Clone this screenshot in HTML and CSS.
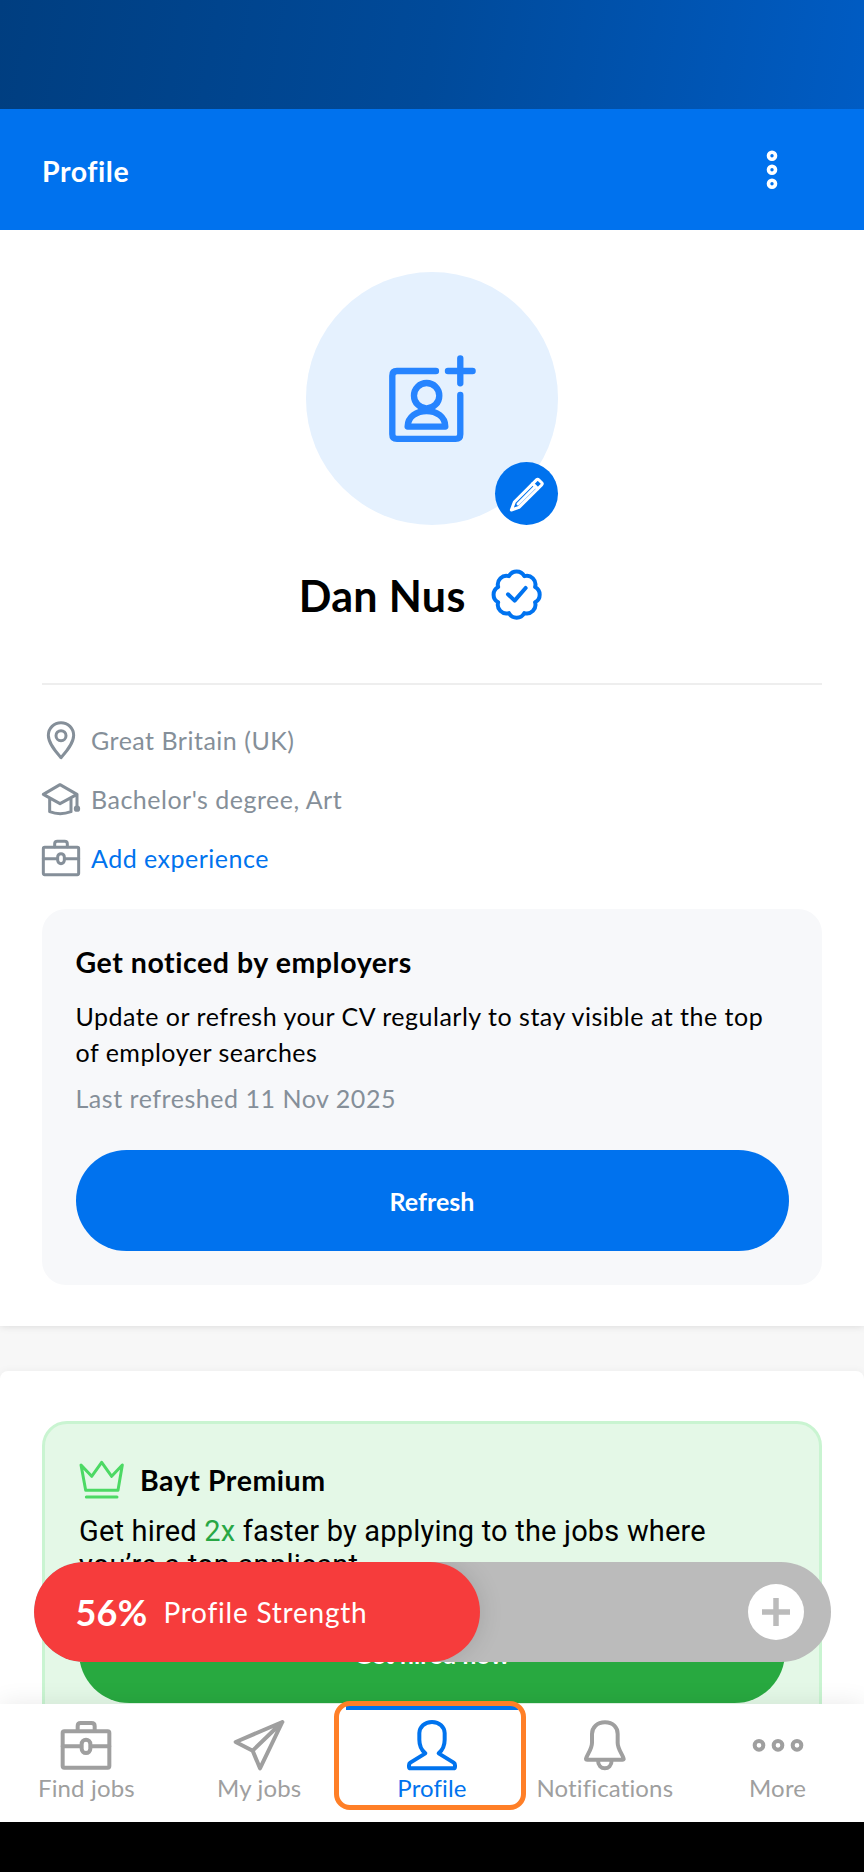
FILE: index.html
```html
<!DOCTYPE html>
<html lang="en">
<head>
<meta charset="utf-8">
<title>Profile</title>
<link rel="stylesheet" href="styles.css">
</head>
<body>
<div class="screen">
  <div class="status-bar"></div>
  <header class="app-bar">
    <h1 class="app-title">Profile</h1>
    <svg class="kebab" viewBox="0 0 12 40" fill="none" stroke="#fff" stroke-width="3.6"><circle cx="6" cy="5.7" r="3.5"/><circle cx="6" cy="19.7" r="3.5"/><circle cx="6" cy="33.7" r="3.5"/></svg>
  </header>

  <main class="content">
    <section class="profile">
      <div class="avatar">
        <svg class="avatar-icon" viewBox="47 36 758 758" fill="none" stroke="#2684ff" stroke-width="19" stroke-linecap="round" stroke-linejoin="round">
          <path d="M437 333H320Q306 333 306 347V523Q306 537 320 537H496Q510 537 510 523V405"/>
          <path d="M473 333H547M510 295V370"/>
          <circle cx="409" cy="407" r="38"/>
          <path d="M352 500C352 470 380 453 409 453S465 470 465 500Z"/>
        </svg>
        <span class="edit-badge">
          <svg viewBox="616 604 189 189" fill="none" stroke="#fff" stroke-width="9" stroke-linecap="round" stroke-linejoin="round">
            <path d="M665 748L674 724L742 656Q745 655 748 658L757 667Q759 670 756 673L688 740Z"/>
            <path d="M729 669L744 684M734 681L685 730"/>
          </svg>
        </span>
      </div>

      <div class="name-row">
        <h2 class="name">Dan Nus</h2>
        <svg class="verified" viewBox="630 58 155 155" fill="none" stroke="#0073f0" stroke-width="12" stroke-linecap="round" stroke-linejoin="round">
          <path d="M684 79.6A26 26 0 0 1 730 79.6A26 26 0 0 1 762.4 112A26 26 0 0 1 762.4 158A26 26 0 0 1 730 190.4A26 26 0 0 1 684 190.4A26 26 0 0 1 651.6 158A26 26 0 0 1 651.6 112A26 26 0 0 1 684 79.6Z"/>
          <path d="M681 134L701 153L734 115"/>
        </svg>
      </div>

      <ul class="facts">
        <li><svg class="fact-icon" viewBox="33 150 120 120"><circle cx="93" cy="197" r="15"/><path d="M93 263C78 246 55 221 55 196A38 38 0 0 1 131 196C131 221 108 246 93 263Z"/></svg><span>Great Britain (UK)</span></li>
        <li><svg class="fact-icon" viewBox="33 326 120 120"><path d="M40 372L90 343L141 372L90 400ZM59 384V424Q90 436 123 424V384M141 372V408"/><circle cx="141" cy="415" r="5"/></svg><span>Bachelor's degree, Art</span></li>
        <li><svg class="fact-icon" viewBox="33 504 120 120"><rect x="40" y="532" width="106" height="82" rx="4"/><path d="M74 530V522Q74 514 82 514H104Q112 514 112 522V530M40 566H80M105 566H146"/><rect x="83" y="551" width="20" height="30" rx="10"/></svg><a class="link">Add experience</a></li>
      </ul>

      <div class="notice">
        <h3 class="notice-title">Get noticed by employers</h3>
        <p class="notice-text">Update or refresh your CV regularly to stay visible at the top<br>of employer searches</p>
        <p class="notice-date">Last refreshed 11 Nov 2025</p>
        <button class="btn">Refresh</button>
      </div>
    </section>

    <section class="premium-section">
      <div class="premium">
        <div class="premium-head">
          <svg class="crown" viewBox="235 508 138 124" fill="none" stroke="#4cd964" stroke-width="9" stroke-linecap="round" stroke-linejoin="round"><path d="M241 526L255 602H352L365 526L333 560L303 518L273 560ZM257 622H349"/></svg>
          <h3 class="premium-title">Bayt Premium</h3>
        </div>
        <p class="premium-text">Get hired <span class="accent">2x</span> faster by applying to the jobs where<br>you’re a top applicant</p>
        <button class="btn btn-green">Get hired now</button>
      </div>
    </section>
  </main>

  <div class="strength">
    <div class="strength-fill"><b class="percent">56%</b><span class="strength-label">Profile Strength</span></div>
    <svg class="plus" viewBox="0 0 56 56"><circle cx="28" cy="28" r="28" fill="#fff"/><path d="M28 14V42M14 28H42" stroke="#bbb" stroke-width="5.5"/></svg>
  </div>

  <nav class="tabs">
    <a class="tab"><svg viewBox="184 541 150 150"><rect x="189" y="575" width="140" height="109" rx="5"/><path d="M234 574V559Q234 550 243 550H275Q285 550 285 559V574M189 620H242M276 620H329"/><rect x="246" y="600" width="26" height="40" rx="13"/></svg><span>Find jobs</span></a>
    <a class="tab"><svg viewBox="702 541 150 150"><path d="M847 547L707 607L758 633L780 686ZM758 633L847 547"/></svg><span>My jobs</span></a>
    <a class="tab active"><svg viewBox="1221 541 150 150"><path d="M1296 547C1273 547 1259 562 1258 580V600C1258 620 1264 631 1276 641L1231 669Q1227 672 1227 677V681Q1227 686 1232 686H1360Q1365 686 1365 681V677Q1365 672 1361 669L1316 641C1328 631 1334 620 1334 600V580C1333 562 1319 547 1296 547Z"/></svg><span>Profile</span></a>
    <a class="tab"><svg viewBox="449 541 150 150"><path d="M524 548C500 548 485 563 485 583V609C485 628 470 645 467 657Q467 660 471 660H576Q581 660 580 657C577 645 562 628 562 609V583C562 563 548 548 524 548ZM503 662C503 694 544 694 544 662"/></svg><span>Notifications</span></a>
    <a class="tab"><svg viewBox="968 541 150 150"><circle cx="986" cy="617" r="13"/><circle cx="1043" cy="617" r="13"/><circle cx="1100" cy="617" r="13"/></svg><span>More</span></a>
    <span class="highlight"></span>
  </nav>
  <div class="home-bar"></div>
</div>
</body>
</html>
```
FILE: styles.css
```css
* { box-sizing: border-box; margin: 0; padding: 0; }

body { font-family: Lato, "Liberation Sans", sans-serif; color: #000; }

.screen {
  position: relative;
  width: 864px;
  height: 1872px;
  display: flex;
  flex-direction: column;
  overflow: hidden;
  background: #f7f7f7;
}

.status-bar { flex: 0 0 109px; background: linear-gradient(100deg, #003e80, #004a9a 50%, #005cc4); }

.app-bar {
  flex: 0 0 121.3px;
  display: flex;
  align-items: center;
  justify-content: space-between;
  padding: 0 86px 0 42px;
  background: #0072ee;
  color: #fff;
}
.app-title { font-size: 28.5px; line-height: 36px; letter-spacing: .55px; padding-top: 3px; }
.kebab { width: 12px; height: 40px; }

.content { flex: 1 1 0; min-height: 0; overflow: hidden; display: flex; flex-direction: column; }

.profile {
  flex: 0 0 1096px;
  padding: 42px 42px 0;
  background: #fff;
  box-shadow: 0 0 8px rgba(0, 0, 0, .13);
}

.avatar {
  position: relative;
  width: 252.6px;
  height: 252.6px;
  margin: 0 auto;
  border-radius: 50%;
  background: #e5f1fe;
}
.avatar-icon { display: block; width: 100%; height: 100%; }
.edit-badge { position: absolute; right: 0; bottom: 0; width: 63px; height: 63px; border-radius: 50%; background: #0072ee; }
.edit-badge svg { display: block; width: 100%; height: 100%; }

.name-row {
  display: flex;
  align-items: center;
  justify-content: center;
  gap: 25px;
  height: 52px;
  margin-top: 44.4px;
  padding-right: 23px;
}
.name { font-size: 43px; line-height: 52px; letter-spacing: .35px; padding-top: 1px; }
.verified { width: 51.6px; height: 51.6px; }

.facts {
  margin-top: 62px;
  padding-top: 25.6px;
  border-top: 2px solid #eee;
  list-style: none;
  font-size: 25px;
  letter-spacing: .5px;
  color: #858f99;
}
.facts li { display: flex; align-items: center; gap: 10px; height: 58.8px; }
.fact-icon { width: 40px; height: 40px; margin-left: -1px; fill: none; stroke: #858f99; stroke-width: 9; stroke-linejoin: round; stroke-linecap: round; }
.link { color: #0073ee; }

.notice { margin-top: 22px; height: 375.5px; padding: 35px 33.5px 0; border-radius: 24px; background: #f7f8fa; }
.notice-title { font-size: 28.5px; line-height: 36px; letter-spacing: .55px; }
.notice-text { margin-top: 18px; font-size: 25px; line-height: 36px; letter-spacing: .51px; }
.notice-date { margin-top: 10px; font-size: 25px; line-height: 36px; letter-spacing: .53px; color: #858f99; }

.btn {
  display: block;
  width: 100%;
  height: 101px;
  margin-top: 33.5px;
  padding-top: 2px;
  border: 0;
  border-radius: 51px;
  background: #0072ee;
  color: #fff;
  font: bold 25px/30px Lato, sans-serif;
}

.premium-section {
  flex: 0 0 400px;
  margin-top: 44.3px;
  padding: 50.4px 42px 0;
  border-radius: 8px 8px 0 0;
  background: #fff;
  box-shadow: 0 0 8px rgba(0, 0, 0, .05);
}
.premium { height: 400px; padding: 34px; border: 3px solid #c9f4d1; border-radius: 25px; background: #e4f8e7; }
.premium-head { display: flex; align-items: center; gap: 15px; height: 44px; }
.crown { width: 46px; height: 41.3px; }
.premium-title { font-size: 28.5px; line-height: 36px; letter-spacing: .55px; }
.premium-text { margin-top: 12px; font: 29px/34px Roboto, sans-serif; letter-spacing: .19px; }
.accent { color: #28a745; }
.btn-green { margin-top: 20px; padding-top: 5px; background: #28a940; font-size: 24.5px; letter-spacing: .1px; }

.strength {
  position: absolute;
  z-index: 1;
  left: 33.5px;
  top: 1561.5px;
  width: 797px;
  height: 100.5px;
  display: flex;
  align-items: center;
  justify-content: space-between;
  padding-right: 26.5px;
  border-radius: 51px;
  background: #bbb;
  overflow: hidden;
}
.strength-fill {
  width: 446.5px;
  height: 100%;
  display: flex;
  align-items: center;
  padding: 1px 0 0 42px;
  gap: 16px;
  border-radius: 51px;
  background: #f63c3c;
  box-shadow: 0 0 24px rgba(0, 0, 0, .13);
  color: #fff;
}
.percent { font-size: 36px; letter-spacing: .2px; }
.strength-label { font-size: 28px; letter-spacing: .78px; }
.plus { width: 56px; height: 56px; }

.tabs {
  position: relative;
  flex: 0 0 117.7px;
  display: grid;
  grid-template-columns: repeat(5, 1fr);
  background: #fff;
  box-shadow: 0 0 24px rgba(0, 0, 0, .09);
}
.tab { display: flex; flex-direction: column; align-items: center; padding-top: 16.5px; font-size: 24px; line-height: 30px; letter-spacing: .15px; color: #9f9f9f; }
.tab svg { display: block; width: 50px; height: 50px; margin-bottom: 3px; overflow: visible; fill: none; stroke: #9f9f9f; stroke-width: 12; stroke-linejoin: round; stroke-linecap: round; }
.tab.active { color: #0073ee; box-shadow: inset 0 6px #0073ee; }
.tab.active svg { stroke: #0073ee; }
.highlight { position: absolute; left: 333.5px; top: -2.5px; width: 192px; height: 109px; border: 5px solid #ff7f27; border-radius: 16px; }

.home-bar { flex: 0 0 50.5px; background: #000; }
```
